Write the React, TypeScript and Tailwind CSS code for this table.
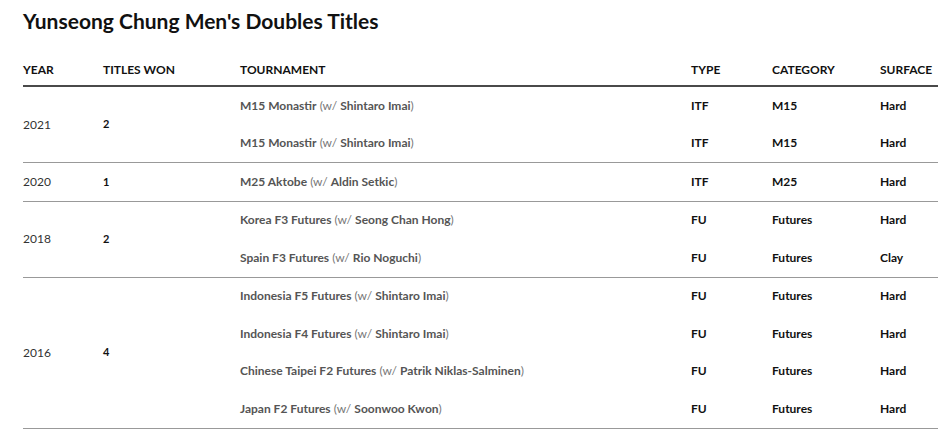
import React from "react";

type Row = { t: string; p: string; type: string; cat: string; surf: string };
type Group = { year: string; won: string; rows: Row[] };

const groups: Group[] = [
  {
    year: "2021",
    won: "2",
    rows: [
      { t: "M15 Monastir", p: "Shintaro Imai", type: "ITF", cat: "M15", surf: "Hard" },
      { t: "M15 Monastir", p: "Shintaro Imai", type: "ITF", cat: "M15", surf: "Hard" },
    ],
  },
  {
    year: "2020",
    won: "1",
    rows: [{ t: "M25 Aktobe", p: "Aldin Setkic", type: "ITF", cat: "M25", surf: "Hard" }],
  },
  {
    year: "2018",
    won: "2",
    rows: [
      { t: "Korea F3 Futures", p: "Seong Chan Hong", type: "FU", cat: "Futures", surf: "Hard" },
      { t: "Spain F3 Futures", p: "Rio Noguchi", type: "FU", cat: "Futures", surf: "Clay" },
    ],
  },
  {
    year: "2016",
    won: "4",
    rows: [
      { t: "Indonesia F5 Futures", p: "Shintaro Imai", type: "FU", cat: "Futures", surf: "Hard" },
      { t: "Indonesia F4 Futures", p: "Shintaro Imai", type: "FU", cat: "Futures", surf: "Hard" },
      { t: "Chinese Taipei F2 Futures", p: "Patrik Niklas-Salminen", type: "FU", cat: "Futures", surf: "Hard" },
      { t: "Japan F2 Futures", p: "Soonwoo Kwon", type: "FU", cat: "Futures", surf: "Hard" },
    ],
  },
];

export default function App() {
  return (
    <div
      className="bg-white w-[938px] h-[437px] overflow-hidden pl-[23px]"
      style={{ fontFamily: "Lato, 'Open Sans', sans-serif" }}
    >
      <h1 className="text-[21px] font-bold text-[#111] leading-none pt-[10px] h-[55px]">
        Yunseong Chung Men's Doubles Titles
      </h1>
      <div className="w-[930px]">
        <div className="flex items-center h-[32px] border-b-2 border-[#4a4a4a] text-[12px] font-bold text-[#111] uppercase">
          <div className="w-[80px]">Year</div>
          <div className="w-[137px]">Titles Won</div>
          <div className="w-[451px]">Tournament</div>
          <div className="w-[81px]">Type</div>
          <div className="w-[108px]">Category</div>
          <div className="flex-1">Surface</div>
        </div>
        {groups.map((g, gi) => (
          <div key={gi} className="flex border-b border-[#999]">
            <div className="w-[80px] flex items-center text-[12px] text-[#333]">{g.year}</div>
            <div className="w-[137px] flex items-center text-[11px] font-bold text-[#111]">{g.won}</div>
            <div className="flex-1 flex flex-col">
              {g.rows.map((r, ri) => (
                <div key={ri} className="flex items-center h-[37.5px] text-[12px]">
                  <div className="w-[451px] text-[#555]">
                    <span className="font-bold">{r.t}</span>{" "}
                    <span className="text-[#777]">(w/ </span>
                    <span className="font-bold">{r.p}</span>
                    <span className="text-[#777]">)</span>
                  </div>
                  <div className="w-[81px] font-bold text-[#111]">{r.type}</div>
                  <div className="w-[108px] font-bold text-[#111]">{r.cat}</div>
                  <div className="flex-1 font-bold text-[#111]">{r.surf}</div>
                </div>
              ))}
            </div>
          </div>
        ))}
      </div>
    </div>
  );
}
